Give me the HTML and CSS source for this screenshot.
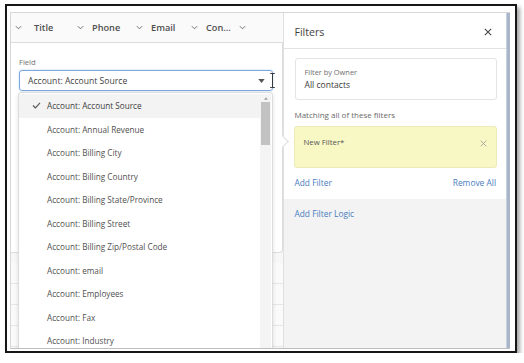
FILE: index.html
```html
<!DOCTYPE html>
<html lang="en">
<head>
    <meta charset="UTF-8">
    <title>Filters</title>
    <link rel="stylesheet" href="styles.css">
</head>
<body>
    <div class="frame">
        <div class="app">
            <!-- list view side -->
            <div class="list-side">
                <div class="col-header">
                    <div class="col col-0"><svg class="chev" viewBox="0 0 8 5"><polyline points="1,1 4,4 7,1"/></svg></div>
                    <div class="col col-1"><span>Title</span><svg class="chev" viewBox="0 0 8 5"><polyline points="1,1 4,4 7,1"/></svg></div>
                    <div class="col col-2"><span>Phone</span><svg class="chev" viewBox="0 0 8 5"><polyline points="1,1 4,4 7,1"/></svg></div>
                    <div class="col col-3"><span>Email</span><svg class="chev" viewBox="0 0 8 5"><polyline points="1,1 4,4 7,1"/></svg></div>
                    <div class="col col-4"><span>Con...</span><svg class="chev" viewBox="0 0 8 5"><polyline points="1,1 4,4 7,1"/></svg></div>
                </div>

                <div class="editor">
                    <div class="field-label">Field</div>
                    <div class="select">
                        <span>Account: Account Source</span>
                        <svg class="caret" viewBox="0 0 8 5"><polygon points="0,0 8,0 4,5"/></svg>
                        <svg class="ibeam" viewBox="0 0 5 16"><path d="M0 0.5 H5 M2.5 0.5 V15.5 M0 15.5 H5"/></svg>
                    </div>
                </div>

                <div class="rows">
                    <div class="row"></div>
                    <div class="row"></div>
                    <div class="row"></div>
                    <div class="row"></div>
                    <div class="row"></div>
                </div>

                <div class="dropdown">
                    <ul class="options">
                        <li class="option selected">
                            <svg class="check" viewBox="0 0 10 8"><polyline points="1,4 3.8,6.8 9,1"/></svg>
                            Account: Account Source
                        </li>
                        <li class="option">Account: Annual Revenue</li>
                        <li class="option">Account: Billing City</li>
                        <li class="option">Account: Billing Country</li>
                        <li class="option">Account: Billing State/Province</li>
                        <li class="option">Account: Billing Street</li>
                        <li class="option">Account: Billing Zip/Postal Code</li>
                        <li class="option">Account: email</li>
                        <li class="option">Account: Employees</li>
                        <li class="option">Account: Fax</li>
                        <li class="option">Account: Industry</li>
                    </ul>
                    <div class="scrollbar">
                        <svg class="scroll-up" viewBox="0 0 6 4"><polygon points="0,4 6,4 3,0"/></svg>
                        <div class="thumb"></div>
                    </div>
                </div>
            </div>

            <!-- filters panel -->
            <div class="filters">
                <div class="filters-header">
                    <span class="filters-title">Filters</span>
                    <svg class="close" viewBox="0 0 10 10"><path d="M1 1 L9 9 M9 1 L1 9"/></svg>
                </div>
                <div class="filters-body">
                    <div class="owner-box">
                        <div class="owner-label">Filter by Owner</div>
                        <div class="owner-value">All contacts</div>
                    </div>
                    <div class="matching">Matching all of these filters</div>
                    <div class="filter-item">
                        <span>New Filter*</span>
                        <svg class="remove" viewBox="0 0 10 10"><path d="M1 1 L9 9 M9 1 L1 9"/></svg>
                    </div>
                    <div class="filter-actions">
                        <a class="link">Add Filter</a>
                        <a class="link">Remove All</a>
                    </div>
                </div>
                <div class="filters-logic">
                    <a class="link">Add Filter Logic</a>
                </div>
            </div>
            <div class="edge-bar"></div>
        </div>
    </div>
</body>
</html>
```

FILE: styles.css
```css
* {
    box-sizing: border-box;
    margin: 0;
    padding: 0;
}

body {
    background: #fff;
    font-family: 'Open Sans', 'Liberation Sans', sans-serif;
    color: #4a4a4a;
}

.frame {
    width: 512px;
    height: 349px;
    margin: 4px 0 0 5px;
    border: 2px solid #161616;
    padding: 6px 5px 2px 3px;
    background: #fff;
    box-shadow: 3px 3px 4px rgba(0, 0, 0, 0.35);
}

.app {
    display: flex;
    height: 100%;
    border-top: 1px solid #d8d8d8;
    border-left: 1px solid #d8d8d8;
    border-bottom: 1px solid #bdbdbd;
    overflow: hidden;
}

/* list view side */
.list-side {
    position: relative;
    width: 273px;
    background: #f7f7f7;
}

.col-header {
    display: flex;
    align-items: center;
    height: 30px;
    background: #fafafa;
    border-bottom: 1px solid #dcdcdc;
    font-size: 9.2px;
    font-weight: 600;
    color: #4f4f4f;
}

.col {
    display: flex;
    align-items: center;
    justify-content: space-between;
    padding: 0 4px;
}

.col-0 { width: 19px; padding-left: 4px; }
.col-1 { width: 58px; }
.col-2 { width: 59px; }
.col-3 { width: 55px; }
.col-4 { width: 48px; }

.chev {
    width: 7px;
    height: 5px;
    fill: none;
    stroke: #6b6b6b;
    stroke-width: 1.1;
}

.editor {
    height: 210px;
    background: #fff;
    border-right: 1px solid #dcdcdc;
    border-bottom: 1px solid #dcdcdc;
    border-bottom-right-radius: 4px;
    padding: 14px 0 0 8px;
    position: relative;
}

.editor::after {
    content: '';
    position: absolute;
    right: -5px;
    top: 94px;
    width: 8px;
    height: 8px;
    background: #fff;
    border-top: 1px solid #dcdcdc;
    border-right: 1px solid #dcdcdc;
    transform: rotate(45deg);
}

.field-label {
    font-size: 7.6px;
    color: #6e6e6e;
    margin-bottom: 3px;
}

.select {
    position: relative;
    width: 254px;
    height: 21px;
    border: 1px solid #7fa7dc;
    border-radius: 3px;
    display: flex;
    align-items: center;
    padding-left: 8px;
    font-size: 8.6px;
    color: #3f3f3f;
    box-shadow: 0 0 2px rgba(0, 112, 210, 0.35);
}

.caret {
    position: absolute;
    right: 7px;
    top: 8px;
    width: 7px;
    height: 4px;
    fill: #555;
}

.ibeam {
    position: absolute;
    right: -3px;
    top: 2px;
    width: 5px;
    height: 15px;
    fill: none;
    stroke: #333;
    stroke-width: 1;
}

.rows {
    padding-top: 10px;
}

.row {
    height: 21px;
    border-bottom: 1px solid #e6e6e6;
    background: #fafafa;
}

/* dropdown menu over the editor */
.dropdown {
    position: absolute;
    left: 7px;
    top: 79px;
    width: 255px;
    bottom: -2px;
    background: #fff;
    border: 1px solid #dcdcdc;
    border-radius: 3px;
    box-shadow: 0 2px 4px rgba(0, 0, 0, 0.12);
    display: flex;
    padding-top: 1px;
}

.options {
    list-style: none;
    flex: 1;
}

.option {
    position: relative;
    height: 23.5px;
    display: flex;
    align-items: center;
    padding-left: 28px;
    font-size: 8.2px;
    color: #505050;
}

.option.selected {
    background: #f3f3f3;
    color: #3e3e3e;
}

.check {
    position: absolute;
    left: 13px;
    top: 8px;
    width: 9px;
    height: 7px;
    fill: none;
    stroke: #555;
    stroke-width: 1.3;
}

.scrollbar {
    width: 11px;
    margin-right: 1px;
    background: #f4f4f4;
    display: flex;
    flex-direction: column;
    align-items: center;
}

.scroll-up {
    width: 4px;
    height: 3px;
    margin: 3px 0 2px;
    fill: #a0a0a0;
}

.thumb {
    width: 9px;
    height: 43px;
    background: #c2c2c2;
}

/* filters panel */
.filters {
    width: 223px;
    display: flex;
    flex-direction: column;
    background: #f3f3f3;
    border-left: 1px solid #e0e0e0;
}

.filters-header {
    height: 36px;
    background: #fff;
    border-bottom: 1px solid #e2e2e2;
    display: flex;
    align-items: center;
    justify-content: space-between;
    padding: 3px 14px 0 10px;
}

.filters-title {
    font-size: 10.6px;
    color: #3e3e3e;
}

.close {
    width: 8px;
    height: 8px;
    fill: none;
    stroke: #4a4a4a;
    stroke-width: 1.4;
}

.filters-body {
    background: #fff;
    padding: 9px 9px 0 10px;
    height: 150px;
}

.owner-box {
    height: 42px;
    border: 1px solid #e4e4e4;
    border-radius: 3px;
    padding: 8px 8px 0 8px;
    margin-left: 1px;
}

.owner-label {
    font-size: 7.4px;
    color: #6e6e6e;
    line-height: 11px;
}

.owner-value {
    font-size: 8.6px;
    color: #3a3a3a;
    line-height: 14px;
}

.matching {
    font-size: 8px;
    color: #6a6a6a;
    margin: 9px 0 6px;
}

.filter-item {
    height: 42px;
    background: #f8f8c5;
    border: 1px solid #ecebb8;
    border-radius: 3px;
    display: flex;
    justify-content: space-between;
    align-items: flex-start;
    padding: 10px 9px 0 8px;
    font-size: 7.8px;
    color: #555;
}

.remove {
    width: 7px;
    height: 7px;
    margin-top: 3px;
    fill: none;
    stroke: #a0a0a0;
    stroke-width: 1.3;
}

.filter-actions {
    display: flex;
    justify-content: space-between;
    margin-top: 9px;
    padding-right: 1px;
    font-size: 8.4px;
}

.link {
    font-size: 8.4px;
    color: #4a7dbf;
}

.filters-logic {
    flex: 1;
    padding: 9px 10px;
    font-size: 8.4px;
}

.edge-bar {
    width: 4px;
    background: #a9b5c8;
    border-left: 1px solid #c8d0dc;
}
```
